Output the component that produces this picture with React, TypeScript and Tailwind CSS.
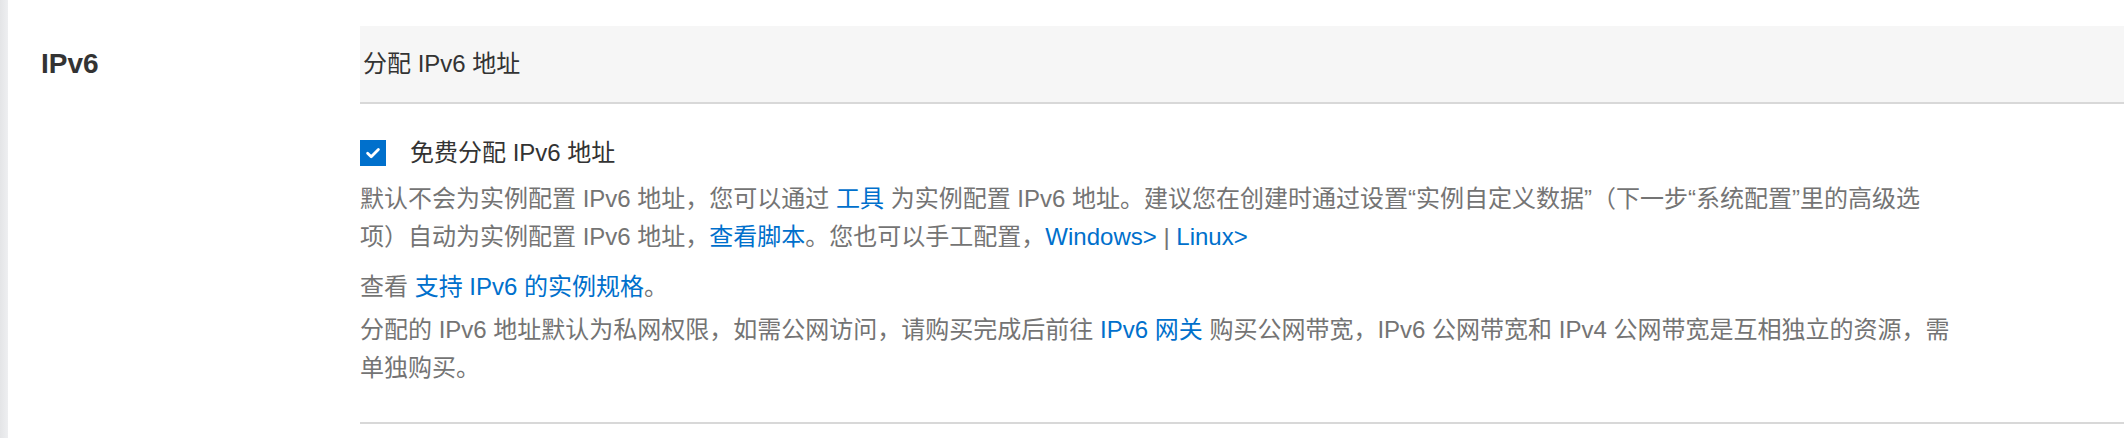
import React from "react";

const Link = ({ children }: { children: React.ReactNode }) => (
  <a className="text-[#0070cc] cursor-pointer">{children}</a>
);

export default function App() {
  return (
    <div className="w-[2124px] h-[438px] bg-white flex font-['Liberation_Sans','Noto_Sans_CJK_SC',sans-serif] [text-spacing-trim:space-all] overflow-hidden">
      <div className="w-[8px] h-full bg-gradient-to-r from-[#e4e5e7] to-[#eeeff1] shrink-0" />
      <div className="w-[352px] shrink-0 pl-[33px] pt-[26px]">
        <div className="h-[76px] flex items-center text-[28px] font-bold text-[#333]">IPv6</div>
      </div>
      <div className="flex-1 pt-[26px]">
        <div className="h-[78px] bg-[#f6f6f6] border-b-2 border-[#d8d8d8] flex items-center pl-[3px] text-[24px] text-[#333]">
          分配 IPv6 地址
        </div>
        <div className="mt-[30px] h-[38px] flex items-center">
          <span className="w-[26px] h-[26px] bg-[#0070cc] flex items-center justify-center shrink-0">
            <svg width="18" height="18" viewBox="0 0 18 18" fill="none">
              <path d="M3.6 9.2l3.6 3.6L14.4 5.4" stroke="white" strokeWidth="2.8" strokeLinecap="round" strokeLinejoin="round" />
            </svg>
          </span>
          <span className="ml-[24px] text-[24px] text-[#333]">免费分配 IPv6 地址</span>
        </div>
        <div className="mt-[8px] text-[24px] leading-[38px] text-[#747474] whitespace-nowrap">
          默认不会为实例配置 IPv6 地址，您可以通过 <Link>工具</Link> 为实例配置 IPv6 地址。建议您在创建时通过设置“实例自定义数据”（下一步“系统配置”里的高级选
          <br />
          项）自动为实例配置 IPv6 地址，<Link>查看脚本</Link>。您也可以手工配置，<Link>Windows&gt;</Link> | <Link>Linux&gt;</Link>
        </div>
        <div className="mt-[12px] text-[24px] leading-[38px] text-[#747474] whitespace-nowrap">
          查看 <Link>支持 IPv6 的实例规格</Link>。
        </div>
        <div className="mt-[5px] text-[24px] leading-[38px] text-[#747474] whitespace-nowrap">
          分配的 IPv6 地址默认为私网权限，如需公网访问，请购买完成后前往 <Link>IPv6 网关</Link> 购买公网带宽，IPv6 公网带宽和 IPv4 公网带宽是互相独立的资源，需
          <br />
          单独购买。
        </div>
        <div className="mt-[35px] h-[2px] bg-[#d8d8d8]" />
      </div>
    </div>
  );
}
